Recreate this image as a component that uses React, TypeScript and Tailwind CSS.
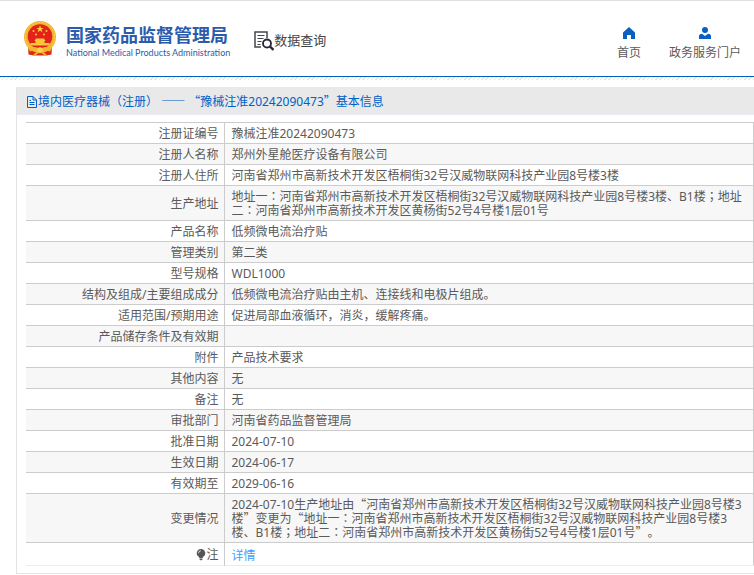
import { Fragment, type ReactNode } from "react";

const rows: [string, string][] = [
  ["注册证编号", "豫械注准20242090473"],
  ["注册人名称", "郑州外星舱医疗设备有限公司"],
  ["注册人住所", "河南省郑州市高新技术开发区梧桐街32号汉威物联网科技产业园8号楼3楼"],
  ["生产地址", "地址一：河南省郑州市高新技术开发区梧桐街32号汉威物联网科技产业园8号楼3楼、B1楼；地址二：河南省郑州市高新技术开发区黄杨街52号4号楼1层01号"],
  ["产品名称", "低频微电流治疗贴"],
  ["管理类别", "第二类"],
  ["型号规格", "WDL1000"],
  ["结构及组成/主要组成成分", "低频微电流治疗贴由主机、连接线和电极片组成。"],
  ["适用范围/预期用途", "促进局部血液循环，消炎，缓解疼痛。"],
  ["产品储存条件及有效期", ""],
  ["附件", "产品技术要求"],
  ["其他内容", "无"],
  ["备注", "无"],
  ["审批部门", "河南省药品监督管理局"],
  ["批准日期", "2024-07-10"],
  ["生效日期", "2024-06-17"],
  ["有效期至", "2029-06-16"],
  ["变更情况", "2024-07-10生产地址由“河南省郑州市高新技术开发区梧桐街32号汉威物联网科技产业园8号楼3楼”变更为“地址一：河南省郑州市高新技术开发区梧桐街32号汉威物联网科技产业园8号楼3楼、B1楼；地址二：河南省郑州市高新技术开发区黄杨街52号4号楼1层01号”。"],
];

/* Quotes and dashes take their full-width form; colons sit in the middle of their cell. */
function Text({ children }: { children: string }) {
  return (
    <>
      {children.split(/([“”—]+|[：；])/).map((part, i) => {
        if (/^[“”—]/.test(part)) {
          return <span key={i} className="font-['Noto_Sans_CJK_SC',sans-serif] leading-none">{part}</span>;
        }
        if (/^[：；]/.test(part)) {
          return <span key={i} lang="ja" className="font-['Noto_Sans_CJK_JP',sans-serif] leading-none">{part}</span>;
        }
        return <Fragment key={i}>{part}</Fragment>;
      })}
    </>
  );
}

function Emblem() {
  return (
    <svg viewBox="0 0 32 35" className="h-[35px] w-8 shrink-0" aria-hidden="true">
      <path d="M4 25h24l-.5 8.500-5 1H9.500l-5-1z" fill="#dc2a1c" />
      <circle cx="16" cy="16" r="16" fill="#f3b52e" />
      <circle cx="16" cy="16" r="14.500" fill="none" stroke="#fbd355" strokeWidth="1" strokeDasharray="2 1.500" />
      <circle cx="16" cy="15.500" r="12.300" fill="#e3231b" />
      <path d="M16 4.500l1 2.500h2.600l-2.100 1.600.8 2.600-2.300-1.600-2.300 1.600.8-2.600-2.100-1.600H15z" fill="#fbd23c" />
      <g fill="#f9c63a">
        <circle cx="9.500" cy="10" r="1" />
        <circle cx="12" cy="13.500" r="1" />
        <circle cx="20" cy="13.500" r="1" />
        <circle cx="22.500" cy="10" r="1" />
        <path d="M12 17.500h8l1.500 2.500h-11zM11.500 20h9v2h5v2.500h-19V22h5z" />
      </g>
      <path d="M4 27c4-1.500 8-1.500 12 1 4-2.500 8-2.500 12-1l-2 3.500c-4-1.500-7-.5-10 2-3-2.500-6-3.500-10-2z" fill="#f3b52e" />
      <circle cx="16" cy="29" r="2.800" fill="#fbd355" />
      <path d="M10 34l4-2.500M22 34l-4-2.500" stroke="#f3b52e" strokeWidth="1.500" />
    </svg>
  );
}

function QueryIcon() {
  return (
    <svg viewBox="0 0 20 20" className="size-5" fill="none" stroke="#45474f" aria-hidden="true">
      <path d="M7 16H1V1h12v6" strokeWidth="1.500" />
      <path d="M3.500 4.500h7M3.500 7.500h6M3.500 10.500h4M3.500 13.500h3" strokeWidth="1.100" />
      <circle cx="13" cy="12.500" r="4" stroke="#25243a" strokeWidth="1.800" />
      <path d="M16 15.500l3.500 3.500" stroke="#25243a" strokeWidth="2.400" />
    </svg>
  );
}

function NavLink({ icon, children }: { icon: ReactNode; children: string }) {
  return (
    <a href="#" className="flex flex-col items-center gap-1.5 text-[#5a5a5a]">
      {icon}
      <span className="leading-4">{children}</span>
    </a>
  );
}

export default function App() {
  return (
    <div
      lang="zh-CN"
      className="bg-white font-['Noto_Sans','Noto_Sans_CJK_SC',sans-serif] text-xs text-[#5a5a5a] [text-spacing-trim:space-all]"
    >
      <header className="flex h-[77px] items-center justify-between border-t border-b border-t-[#e0e0e0] border-b-[#0060c0] pr-[13px] pl-6">
        <div className="flex items-center">
          <Emblem />
          <div className="ml-2.5 pt-1 whitespace-nowrap text-[#2b5cab]">
            <div className="text-lg leading-6 font-bold">国家药品监督管理局</div>
            <div className="font-['Lato',sans-serif] text-[9px] leading-3">National Medical Products Administration</div>
          </div>
          <div className="ml-6 flex items-center pt-1 text-[13px] whitespace-nowrap text-[#444]">
            <QueryIcon />
            <span>数据查询</span>
          </div>
        </div>
        <nav className="flex gap-7 pt-2.5 whitespace-nowrap">
          <NavLink
            icon={
              <svg viewBox="0 0 12 12" className="size-3" fill="#0b5fc0" aria-hidden="true">
                <path d="M6 0l6 5.500V12H8V8H4v4H0V5.500z" />
              </svg>
            }
          >
            首页
          </NavLink>
          <NavLink
            icon={
              <svg viewBox="0 0 12 12" className="size-3" fill="#0b5fc0" aria-hidden="true">
                <circle cx="6" cy="3" r="3" />
                <path d="M0 12V9.500Q0 7 3 6.800L6 9l3-2.200Q12 7 12 9.500V12z" />
              </svg>
            }
          >
            政务服务门户
          </NavLink>
        </nav>
      </header>
      <div className="h-[3px] bg-[repeating-linear-gradient(135deg,#e4e4e4_0_1px,#fff_1px_3px)]" />

      <main className="mt-[7px] ml-4 border-b border-l border-[#e4e4e8]">
        <h1 className="flex h-7 items-center border-b border-[#ebebf3] bg-[#e9e9e9] pt-0.5 pl-[9px] text-[#0060c8]">
          <svg viewBox="0 0 12 12" className="size-3" fill="none" stroke="currentColor" aria-hidden="true">
            <path d="M1.500 .5h5.500l3.500 3.500v7.500H1.500zM7 .5V4h3.500M3.500 4.500h1.500M3.500 6.500h5M3.500 8.500h5" />
          </svg>
          <span className="whitespace-pre"><Text>境内医疗器械（注册） —— “豫械注准20242090473”基本信息</Text></span>
        </h1>
        <div className="pt-[7px] pb-[7px] pl-[9px]">
          <table className="w-full border-collapse border-r border-b border-r-[#ccc] border-b-[#ebebf3] leading-[14px]">
            <tbody>
              {rows.map(([label, value]) => (
                <tr key={label} className="even:bg-[#f7f7f7]">
                  <th scope="row" className="h-[21px] w-[198px] border-y border-r border-[#ccc] pt-1 pr-[5px] pb-0.5 text-right font-normal">{label}</th>
                  <td className="border-y border-[#ccc] pt-1 pr-[5px] pb-0.5 pl-[7px]"><Text>{value}</Text></td>
                </tr>
              ))}
              <tr>
                <th scope="row" className="h-[23px] border-r border-[#ccc] pt-0.5 pr-[5px] font-normal">
                  <span className="flex items-center justify-end">
                    <svg viewBox="0 0 10 12" className="h-3 w-2.5" fill="#555" aria-hidden="true">
                      <path d="M5 0a4.200 4.200 0 0 1 2.500 7.600L6.500 9h-3l-1-1.400A4.200 4.200 0 0 1 5 0zM3.500 9.500h3v1L5 11.500l-1.500-1z" />
                      <path d="M2.500 4.200Q2.500 2 4.800 1.800" fill="none" stroke="#fff" strokeWidth=".8" />
                    </svg>
                    注
                  </span>
                </th>
                <td className="pt-1 pl-[7px]"><a href="#" className="text-[#409eff]">详情</a></td>
              </tr>
            </tbody>
          </table>
        </div>
      </main>
    </div>
  );
}
